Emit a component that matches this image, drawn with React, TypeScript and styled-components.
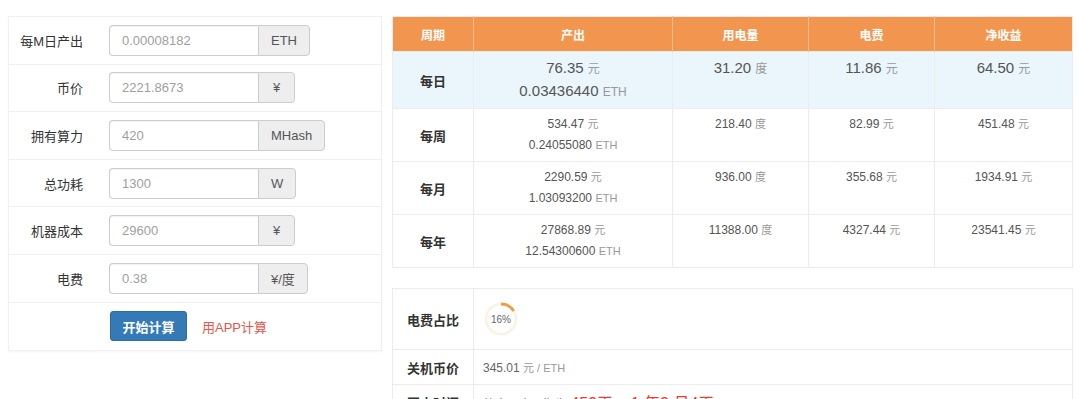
import React from "react";
import styled, { createGlobalStyle } from "styled-components";

const GlobalStyle = createGlobalStyle`
  html, body {
    margin: 0;
    padding: 0;
    background: #ffffff;
    font-family: "Liberation Sans", "Noto Sans CJK SC", sans-serif;
    color: #333;
  }
`;

const Page = styled.div`
  display: flex;
  align-items: flex-start;
  gap: 10px;
  padding: 16px 0 0 8px;
  height: 399px;
  box-sizing: border-box;
  overflow: hidden;
`;

const FormPanel = styled.div`
  width: 374px;
  box-sizing: border-box;
  flex-shrink: 0;
  border: 1px solid #f0f0f0;
  box-shadow: 0 1px 2px rgba(0, 0, 0, 0.04);
`;

const FormRow = styled.div`
  display: flex;
  align-items: center;
  height: 46.6px;
  border-bottom: 1px solid #f0f0f0;
`;

const Label = styled.div`
  width: 74px;
  text-align: right;
  font-size: 13px;
  color: #333;
  margin-right: 26px;
`;

const InputGroup = styled.div`
  display: flex;
  height: 31px;
`;

const Input = styled.div`
  width: 149px;
  box-sizing: border-box;
  border: 1px solid #ccc;
  border-right: none;
  border-radius: 4px 0 0 4px;
  padding: 0 12px;
  display: flex;
  align-items: center;
  font-size: 13px;
  color: #a0a0a0;
  box-shadow: inset 0 1px 1px rgba(0, 0, 0, 0.06);
`;

const Addon = styled.div`
  box-sizing: border-box;
  border: 1px solid #ccc;
  border-radius: 0 4px 4px 0;
  background: #eeeeee;
  color: #555;
  font-size: 13px;
  padding: 0 12px;
  min-width: 37px;
  display: flex;
  align-items: center;
  justify-content: center;
`;

const ActionRow = styled.div`
  display: flex;
  align-items: center;
  padding-left: 101px;
  height: 47px;
  gap: 15px;
`;

const PrimaryButton = styled.button`
  width: 77px;
  height: 30px;
  border: 1px solid #2e6da4;
  border-radius: 3px;
  background: #337ab7;
  color: #fff;
  font-family: inherit;
  font-size: 13px;
  font-weight: bold;
  padding: 0;
`;

const AppLink = styled.span`
  color: #e8554a;
  font-size: 13px;
`;

const RightColumn = styled.div`
  width: 681px;
  flex-shrink: 0;
  display: flex;
  flex-direction: column;
  gap: 20px;
`;

const Table = styled.table`
  width: 681px;
  border-collapse: collapse;
  table-layout: fixed;
  border: 1px solid #ececec;
`;

const HeadCell = styled.th<{ $w?: number }>`
  width: ${(p) => (p.$w ? `${p.$w}px` : "auto")};
  height: 34px;
  padding: 0;
  background: #f2964f;
  color: #fff;
  font-size: 12px;
  font-weight: bold;
  text-align: center;
  border-right: 1px solid #f8bd8f;
  &:last-child {
    border-right: none;
  }
`;

const BodyRow = styled.tr<{ $hi?: boolean }>`
  background: ${(p) => (p.$hi ? "#eaf5fc" : "#fff")};
  height: ${(p) => (p.$hi ? 57 : 53)}px;
`;

const PeriodCell = styled.td`
  text-align: center;
  vertical-align: middle;
  font-size: 13px;
  font-weight: bold;
  color: #333;
  border: 1px solid #ececec;
  padding: 0;
`;

const ValueCell = styled.td<{ $big?: boolean }>`
  text-align: center;
  vertical-align: top;
  border: 1px solid #ececec;
  padding: 5px 0 0;
  font-size: ${(p) => (p.$big ? 15 : 12)}px;
  line-height: ${(p) => (p.$big ? 22 : 21)}px;
  color: #555;
`;

const Unit = styled.span<{ $big?: boolean }>`
  font-size: ${(p) => (p.$big ? 12 : 11)}px;
  color: #999;
`;

const InfoLabel = styled.td`
  width: 80px;
  text-align: center;
  font-size: 13px;
  font-weight: bold;
  color: #333;
  border: 1px solid #ececec;
  padding: 0;
`;

const InfoRow = styled.tr<{ $h: number }>`
  height: ${(p) => p.$h}px;
`;

const InfoValue = styled.td`
  border: 1px solid #ececec;
  padding: 0 0 0 9px;
  font-size: 12px;
  color: #666;
`;

const Donut = styled.div`
  position: relative;
  width: 36px;
  height: 36px;
`;

const DonutText = styled.span`
  position: absolute;
  inset: 0;
  display: flex;
  align-items: center;
  justify-content: center;
  font-size: 10px;
  color: #666;
`;

const Highlight = styled.span`
  color: #e53c33;
  font-size: 16px;
`;

const fields = [
  { label: "每M日产出", value: "0.00008182", unit: "ETH" },
  { label: "币价", value: "2221.8673", unit: "¥" },
  { label: "拥有算力", value: "420", unit: "MHash" },
  { label: "总功耗", value: "1300", unit: "W" },
  { label: "机器成本", value: "29600", unit: "¥" },
  { label: "电费", value: "0.38", unit: "¥/度" },
];

const columns = [
  { title: "周期", w: 80 },
  { title: "产出", w: 198 },
  { title: "用电量", w: 135 },
  { title: "电费", w: 125 },
  { title: "净收益" },
];

const rows = [
  { period: "每日", cny: "76.35", eth: "0.03436440", kwh: "31.20", fee: "11.86", net: "64.50" },
  { period: "每周", cny: "534.47", eth: "0.24055080", kwh: "218.40", fee: "82.99", net: "451.48" },
  { period: "每月", cny: "2290.59", eth: "1.03093200", kwh: "936.00", fee: "355.68", net: "1934.91" },
  { period: "每年", cny: "27868.89", eth: "12.54300600", kwh: "11388.00", fee: "4327.44", net: "23541.45" },
];

const RatioDonut: React.FC<{ pct: number }> = ({ pct }) => {
  const r = 15;
  const c = 2 * Math.PI * r;
  return (
    <Donut>
      <svg width="36" height="36" viewBox="0 0 36 36">
        <circle cx="18" cy="18" r={r} fill="none" stroke="#fcf1e3" strokeWidth="2.5" />
        <circle
          cx="18"
          cy="18"
          r={r}
          fill="none"
          stroke="#e9a047"
          strokeWidth="3"
          strokeDasharray={`${(c * pct) / 100} ${c}`}
          transform="rotate(-90 18 18)"
        />
      </svg>
      <DonutText>{pct}%</DonutText>
    </Donut>
  );
};

export default function App() {
  return (
    <>
      <GlobalStyle />
      <Page>
        <FormPanel>
          {fields.map((f) => (
            <FormRow key={f.label}>
              <Label>{f.label}</Label>
              <InputGroup>
                <Input>{f.value}</Input>
                <Addon>{f.unit}</Addon>
              </InputGroup>
            </FormRow>
          ))}
          <ActionRow>
            <PrimaryButton>开始计算</PrimaryButton>
            <AppLink>用APP计算</AppLink>
          </ActionRow>
        </FormPanel>

        <RightColumn>
          <Table>
            <thead>
              <tr>
                {columns.map((c) => (
                  <HeadCell key={c.title} $w={c.w}>
                    {c.title}
                  </HeadCell>
                ))}
              </tr>
            </thead>
            <tbody>
              {rows.map((r, i) => {
                const big = i === 0;
                return (
                  <BodyRow key={r.period} $hi={big}>
                    <PeriodCell>{r.period}</PeriodCell>
                    <ValueCell $big={big}>
                      {r.cny} <Unit $big={big}>元</Unit>
                      <br />
                      {r.eth} <Unit $big={big}>ETH</Unit>
                    </ValueCell>
                    <ValueCell $big={big}>
                      {r.kwh} <Unit $big={big}>度</Unit>
                    </ValueCell>
                    <ValueCell $big={big}>
                      {r.fee} <Unit $big={big}>元</Unit>
                    </ValueCell>
                    <ValueCell $big={big}>
                      {r.net} <Unit $big={big}>元</Unit>
                    </ValueCell>
                  </BodyRow>
                );
              })}
            </tbody>
          </Table>

          <Table>
            <tbody>
              <InfoRow $h={61}>
                <InfoLabel>电费占比</InfoLabel>
                <InfoValue>
                  <RatioDonut pct={16} />
                </InfoValue>
              </InfoRow>
              <InfoRow $h={35}>
                <InfoLabel>关机币价</InfoLabel>
                <InfoValue>
                  345.01 <Unit>元 / ETH</Unit>
                </InfoValue>
              </InfoRow>
              <InfoRow $h={35}>
                <InfoLabel>回本时间</InfoLabel>
                <InfoValue>
                  静态回本周期为 <Highlight>459天 ≈ 1 年3 月4天</Highlight>
                </InfoValue>
              </InfoRow>
            </tbody>
          </Table>
        </RightColumn>
      </Page>
    </>
  );
}
